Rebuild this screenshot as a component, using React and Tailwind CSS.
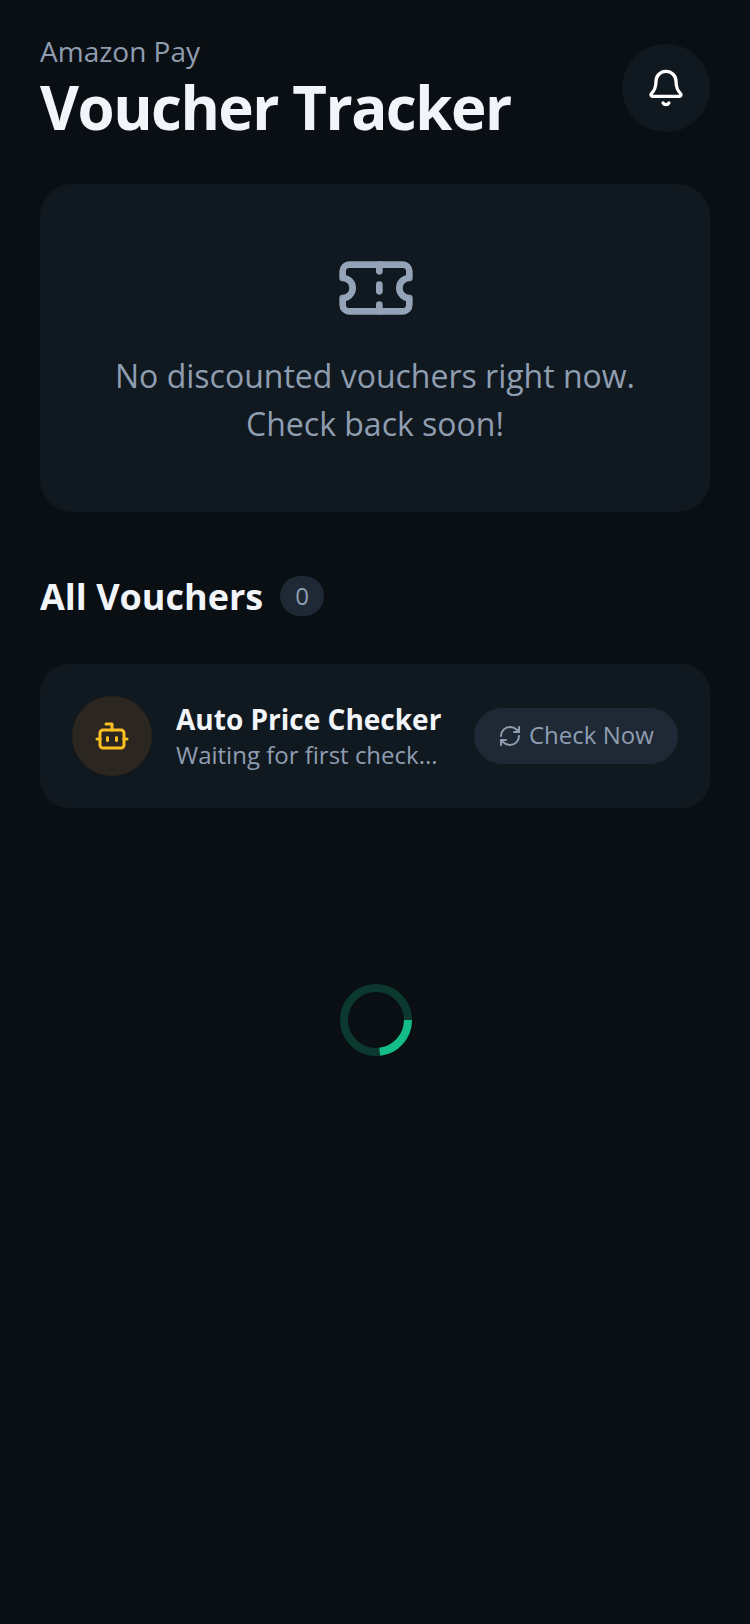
import { Bell, Bot, RefreshCw, Ticket } from "lucide-react";

export default function App() {
  return (
    <div className="min-h-[1624px] bg-[#0a0f14] px-10 pt-8 font-['Open_Sans',sans-serif]">
      <header className="flex items-start justify-between">
        <div>
          <p className="text-[28px] leading-[38px] text-[#8f9db1]">Amazon Pay</p>
          <h1 className="mt-[1px] text-[60px] leading-[72px] font-bold tracking-[-1.5px] text-[#f1f5f9]">Voucher Tracker</h1>
        </div>
        <button className="mt-3 flex h-[88px] w-[88px] items-center justify-center rounded-full bg-[#111920]">
          <Bell className="h-10 w-10 text-white" />
        </button>
      </header>

      <section className="mt-[41px] flex h-[328px] flex-col items-center rounded-[32px] bg-[#111920] pt-16">
        <Ticket className="ml-[2px] h-20 w-20 text-[#94a3b8]" />
        <p className="mt-6 text-center text-[32px] leading-[48px] text-[#8f9db1]">
          No discounted vouchers right now.
          <br />
          Check back soon!
        </p>
      </section>

      <div className="mt-[59px] flex items-center gap-[17px]">
        <h2 className="pt-[2px] text-[36px] leading-[48px] font-bold text-[#f1f5f9]">All Vouchers</h2>
        <span className="flex h-10 w-11 items-center justify-center rounded-full bg-[#1e2935] text-[24px] text-[#8f9db1]">0</span>
      </div>

      <section className="mt-[43px] flex h-[144px] items-center rounded-[28px] bg-[#111920] px-8">
        <div className="flex h-20 w-20 shrink-0 items-center justify-center rounded-full bg-[#2b261f]">
          <Bot className="h-9 w-9 text-[#fbbf24]" />
        </div>
        <div className="ml-6 min-w-0 flex-1">
          <p className="text-[28px] leading-[36px] font-bold whitespace-nowrap text-[#f1f5f9]">Auto Price Checker</p>
          <p className="mt-[1px] truncate text-[24px] leading-[34px] text-[#8f9db1]">Waiting for first check...</p>
        </div>
        <button className="ml-6 flex h-14 w-[204px] shrink-0 items-center gap-[7px] rounded-full bg-[#1e2935] pl-6 text-[24px] text-[#8f9db1]">
          <RefreshCw className="h-6 w-6" />
          <span className="mb-[2px]">Check Now</span>
        </button>
      </section>

      <div className="mt-[176px] flex justify-center pl-[2px]">
        <svg width="72" height="72" viewBox="0 0 72 72" fill="none">
          <circle cx="36" cy="36" r="32" stroke="#10b981" strokeOpacity="0.25" strokeWidth="8" />
          <circle cx="36" cy="36" r="32" stroke="#14bd86" strokeWidth="8" strokeDasharray="46.4 201" />
        </svg>
      </div>
    </div>
  );
}
